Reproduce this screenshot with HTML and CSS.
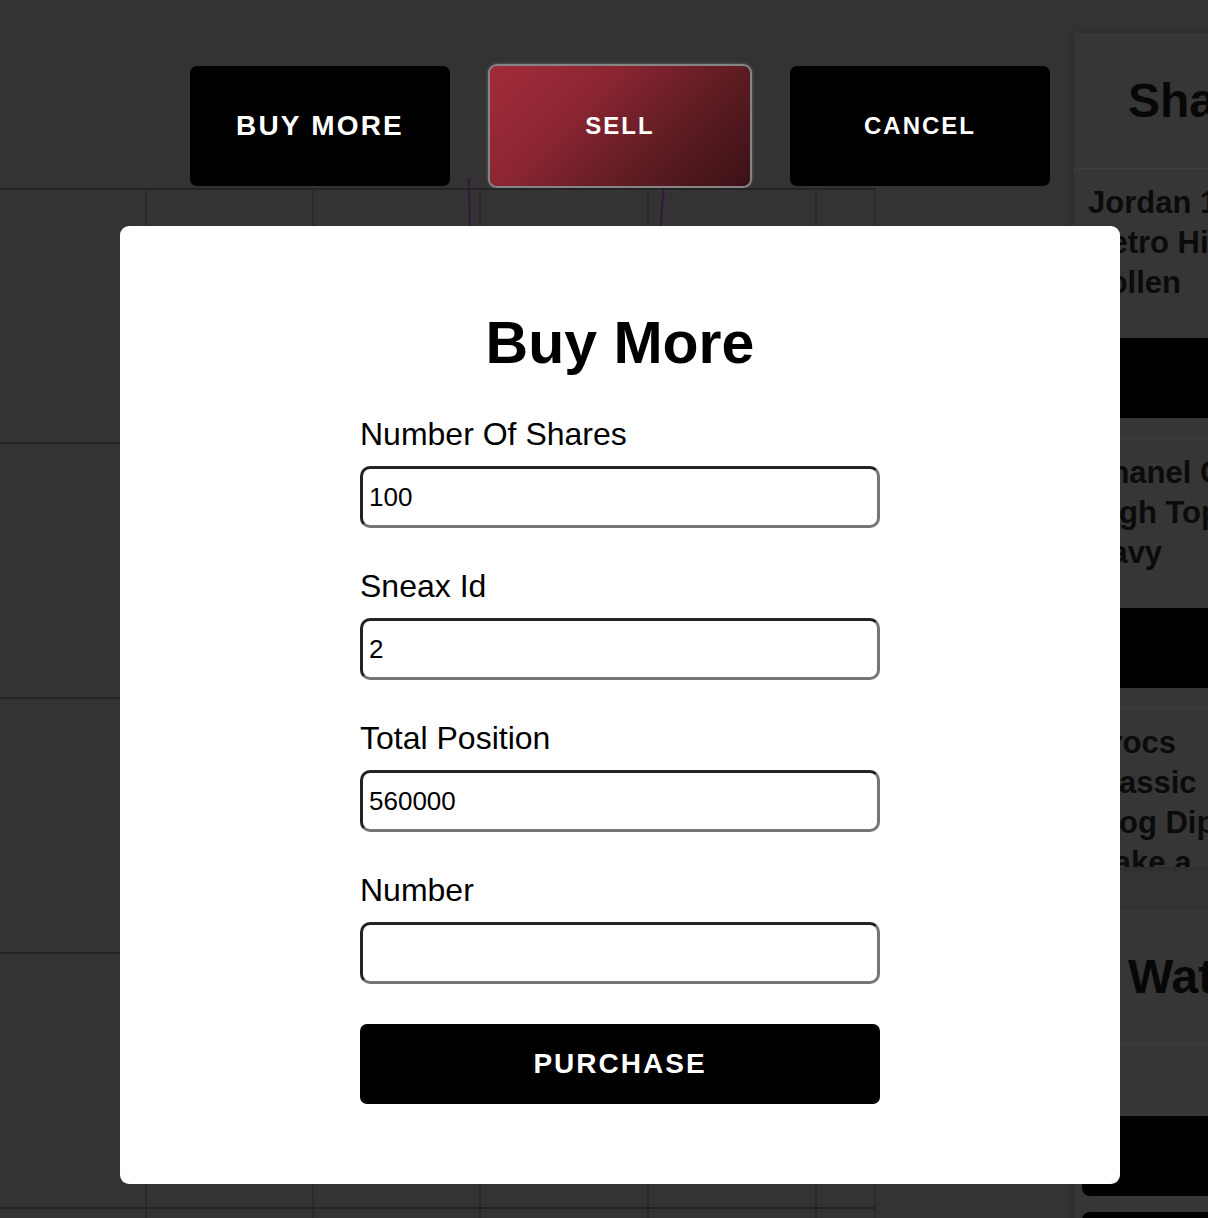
FILE: index.html
```html
<!DOCTYPE html>
<html lang="en">
<head>
<meta charset="utf-8">
<title>Buy More</title>
<link rel="stylesheet" href="styles.css">
</head>
<body>
<div class="page">
  <main class="main">
    <div class="actions">
      <button class="btn btn-buy">BUY MORE</button>
      <button class="btn btn-sell">SELL</button>
      <button class="btn btn-cancel">CANCEL</button>
    </div>
    <svg class="chart" width="876" height="1030" viewBox="0 0 876 1030">
      <g class="grid-v">
        <line x1="146" y1="0" x2="146" y2="1030"/>
        <line x1="313" y1="0" x2="313" y2="1030"/>
        <line x1="480" y1="0" x2="480" y2="1030"/>
        <line x1="648" y1="0" x2="648" y2="1030"/>
        <line x1="816" y1="0" x2="816" y2="1030"/>
        <line x1="875" y1="0" x2="875" y2="1030"/>
      </g>
      <g class="grid-h">
        <line x1="0" y1="1" x2="876" y2="1"/>
        <line x1="0" y1="255" x2="876" y2="255"/>
        <line x1="0" y1="510" x2="876" y2="510"/>
        <line x1="0" y1="765" x2="876" y2="765"/>
        <line x1="0" y1="1020" x2="876" y2="1020"/>
      </g>
      <g class="series">
        <polyline points="469,-10 469.5,20 470,60"/>
        <polyline points="664,0 662,20 660,60"/>
      </g>
    </svg>
  </main>
  <aside class="side">
    <section class="panel">
      <h2 class="panel-title">Shares</h2>
      <div class="list">
        <div class="card">
          <div class="card-name">Jordan 1 Retro High Pollen</div>
          <div class="card-bar"></div>
        </div>
        <div class="card">
          <div class="card-name">Chanel CC High Top Navy</div>
          <div class="card-bar"></div>
        </div>
        <div class="card">
          <div class="card-name">Crocs Classic Clog Dip Make a Wish</div>
          <div class="card-bar"></div>
        </div>
      </div>
    </section>
    <section class="panel panel-watch">
      <h2 class="panel-title">Watchlist</h2>
      <div class="watch-body">
        <div class="watch-bar"></div>
        <div class="watch-bar"></div>
      </div>
    </section>
  </aside>
</div>

<div class="modal">
  <h1 class="modal-title">Buy More</h1>
  <form class="form">
    <div class="field">
      <label class="field-label" for="shares">Number Of Shares</label>
      <input class="field-input" id="shares" type="text" value="100">
    </div>
    <div class="field">
      <label class="field-label" for="sneax">Sneax Id</label>
      <input class="field-input" id="sneax" type="text" value="2">
    </div>
    <div class="field">
      <label class="field-label" for="total">Total Position</label>
      <input class="field-input" id="total" type="text" value="560000">
    </div>
    <div class="field">
      <label class="field-label" for="number">Number</label>
      <input class="field-input" id="number" type="text" value="">
    </div>
    <button class="purchase" type="button">PURCHASE</button>
  </form>
</div>
</body>
</html>
```

FILE: styles.css
```css
html, body {
  margin: 0;
  padding: 0;
  width: 1208px;
  height: 1218px;
  overflow: hidden;
  background: #333333;
  font-family: "Liberation Sans", Arial, Helvetica, sans-serif;
}

.page {
  display: flex;
  width: 1500px;
  height: 1218px;
  position: relative;
}

.main {
  width: 1074px;
  flex-shrink: 0;
}

.actions {
  display: flex;
  gap: 40px;
  padding: 66px 0 0 190px;
  height: 120px;
}

.btn {
  width: 260px;
  height: 120px;
  border: none;
  border-radius: 7px;
  color: #ffffff;
  font-family: "Liberation Sans", Arial, Helvetica, sans-serif;
  font-weight: 700;
  font-size: 24px;
  letter-spacing: 2px;
  padding: 0;
}

.btn-buy {
  background: #000000;
  font-size: 28px;
  letter-spacing: 2.2px;
}

.btn-cancel {
  background: #000000;
}

.btn-sell {
  background: linear-gradient(135deg, #a32c39 0%, #8a2531 35%, #5a1b21 70%, #3b1116 100%);
  box-shadow: 0 0 0 2px #858585, 0 0 3px 2px rgba(170, 170, 170, 0.5);
}

.chart {
  display: block;
  margin-top: 2px;
  overflow: visible;
}

.grid-v line {
  stroke: #2a2a2a;
  stroke-width: 2;
}

.grid-h line {
  stroke: #242424;
  stroke-width: 2;
}

.series polyline {
  fill: none;
  stroke: #34173d;
  stroke-width: 2;
}

.side {
  width: 420px;
  flex-shrink: 0;
}

.panel {
  background: #363636;
  margin-top: 33px;
  box-shadow: -3px 0 6px rgba(0, 0, 0, 0.12);
}

.panel-title {
  margin: 0;
  height: 136px;
  box-sizing: border-box;
  padding-left: 54px;
  display: flex;
  align-items: center;
  font-size: 48px;
  font-weight: 700;
  color: #070707;
  border-bottom: 1px solid #3d3d3d;
}

.list {
  height: 698px;
  overflow: hidden;
}

.card {
  padding: 14px 0 20px 14px;
  border-bottom: 1px solid #3d3d3d;
}

.card-name {
  width: 175px;
  font-size: 31px;
  font-weight: 700;
  line-height: 40px;
  color: #0b0b0b;
}

.card-bar {
  margin-top: 35px;
  height: 80px;
  background: #000000;
}

.panel-watch {
  margin-top: 42px;
}

.watch-body {
  padding: 71px 0 0 8px;
  height: 200px;
}

.watch-bar {
  height: 80px;
  margin-bottom: 16px;
  border-radius: 8px 0 0 8px;
  background: #000000;
}

.modal {
  position: absolute;
  top: 226px;
  left: 120px;
  width: 1000px;
  box-sizing: border-box;
  padding: 85px 240px 80px;
  background: #ffffff;
  border-radius: 9px;
}

.modal-title {
  margin: 0 0 41px;
  text-align: center;
  font-size: 59px;
  line-height: 64px;
  font-weight: 700;
  color: #000000;
}

.form {
  display: flex;
  flex-direction: column;
  gap: 40px;
  margin: 0;
}

.field {
  display: flex;
  flex-direction: column;
}

.field-label {
  display: block;
  font-size: 32px;
  line-height: 36px;
  margin-bottom: 14px;
  color: #000000;
}

.field-input {
  width: 100%;
  height: 62px;
  box-sizing: border-box;
  border-width: 3px;
  border-style: solid;
  border-color: #222222 #767676 #767676 #222222;
  border-radius: 10px;
  padding: 0 6px;
  font-family: "Liberation Sans", Arial, Helvetica, sans-serif;
  font-size: 26px;
  color: #000000;
  background: #ffffff;
  outline: none;
}

.purchase {
  height: 80px;
  width: 100%;
  border: none;
  border-radius: 7px;
  background: #000000;
  color: #ffffff;
  font-family: "Liberation Sans", Arial, Helvetica, sans-serif;
  font-weight: 700;
  font-size: 28px;
  letter-spacing: 2px;
  padding: 0;
}
```
